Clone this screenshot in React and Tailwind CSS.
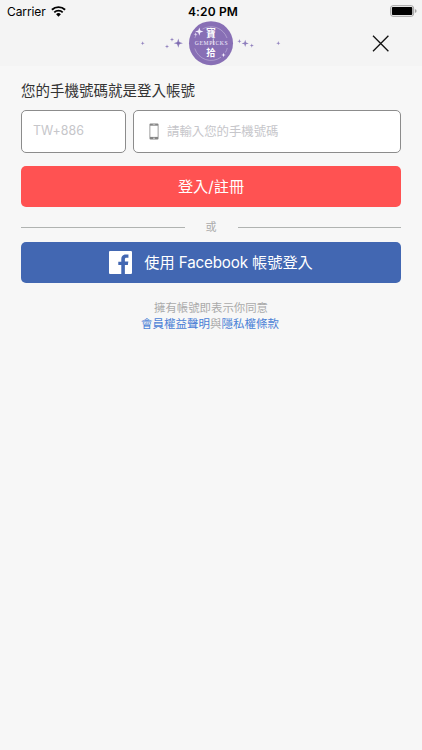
function Sparkle({ x, y, r, color = '#8f7fbd' }) {
  const k = r * 0.24;
  return (
    <path
      fill={color}
      d={`M${x} ${y - r}L${x + k} ${y - k}L${x + r} ${y}L${x + k} ${y + k}L${x} ${y + r}L${x - k} ${y + k}L${x - r} ${y}L${x - k} ${y - k}Z`}
    />
  );
}

function Logo() {
  return (
    <svg width="144" height="46" viewBox="139 20 144 46" className="block">
      <Sparkle x={142.7} y={43.2} r={2} />
      <Sparkle x={167} y={46.5} r={2.1} />
      <Sparkle x={172} y={39.6} r={2.1} />
      <Sparkle x={178.3} y={43.2} r={4.6} />
      <circle cx="178.3" cy="43.2" r="1.3" fill="#7f6cb0" />
      <circle cx="211" cy="43.2" r="22" fill="#886fb5" />
      <path d="M202.5 29A17 17 0 0 1 227 38M194.8 48.5A17 17 0 0 0 221 57.2M227.3 48A17 17 0 0 1 225.4 52.5M194.8 38A17 17 0 0 1 196.5 34.5" fill="none" stroke="#c5b8dc" strokeWidth="0.6" />
      <Sparkle x={199.3} y={31.6} r={4.2} color="#f4efff" />
      <Sparkle x={195.6} y={34.3} r={2} color="#ddd3ef" />
      <Sparkle x={223.5} y={55} r={2.3} color="#f4efff" />
      <g fill="#fff" textAnchor="middle" fontFamily="'Noto Sans CJK TC', sans-serif" fontWeight="700">
        <text x="211" y="36.9" fontSize="9.8">寶</text>
        <text x="211" y="56" fontSize="9.4">拾</text>
      </g>
      <text x="211.2" y="45.4" textLength="33" fill="#f4efff" textAnchor="middle" fontFamily="'Liberation Serif', serif" fontSize="5.6">GEMPICKS</text>
      <path d="M213.3 38.5V45" stroke="#fff" strokeWidth="0.7" />
      <Sparkle x={239.4} y={41.2} r={2.1} />
      <Sparkle x={245.2} y={43.4} r={3.6} />
      <Sparkle x={251.8} y={45.6} r={2.1} />
      <Sparkle x={278.3} y={43.2} r={2.1} />
    </svg>
  );
}

function StatusBar() {
  return (
    <div className="grid h-5 grid-cols-3 items-center pt-0.5 pr-[5px] pl-[7px] font-[Inter,sans-serif] text-black">
      <div className="flex items-center gap-[5px]">
        <span className="pt-px text-[12px] leading-[18px] tracking-[-0.1px]">Carrier</span>
        <svg width="15" height="11" viewBox="0 0 15 11" className="-mt-px">
          <path d="M.9 3.8A9.4 9.4 0 0 1 14.1 3.8" fill="none" stroke="#000" strokeWidth="1.9" />
          <path d="M3.3 6.4A6 6 0 0 1 11.7 6.4" fill="none" stroke="#000" strokeWidth="1.8" />
          <path d="M5.1 8.2A3.4 3.4 0 0 1 9.9 8.2L7.5 10.7Z" fill="#000" />
        </svg>
      </div>
      <div className="pt-px pl-[2px] text-center text-[12px] leading-[18px] font-semibold tracking-[0.15px] whitespace-nowrap">4:20 PM</div>
      <svg width="27" height="12" viewBox="0 0 27 12" className="-mt-px justify-self-end">
        <rect x=".6" y=".7" width="23" height="10.6" rx="2.4" fill="#f4f4f4" stroke="#a2a2a2" />
        <rect x="1.9" y="2" width="20.4" height="8" rx="1" />
        <path d="M24.9 4Q26.6 4.4 26.6 6T24.9 8Z" fill="#a2a2a2" />
      </svg>
    </div>
  );
}

function PhoneIcon() {
  return (
    <svg width="10" height="17" viewBox="0 0 10 17" className="shrink-0">
      <rect x=".5" y=".5" width="9" height="16" rx="1" fill="#858585" />
      <rect x="1.3" y="2.7" width="7.4" height="11.2" fill="#fff" />
      <path d="M3.8 1.6H6.2" stroke="#ddd" strokeWidth=".6" />
      <circle cx="5" cy="15.2" r=".7" fill="#eee" />
    </svg>
  );
}

function FacebookIcon() {
  return (
    <svg width="23" height="23" viewBox="0 0 24 24" className="shrink-0">
      <path
        fill="#fff"
        d="M22.68 0H1.32C.59 0 0 .59 0 1.32v21.36C0 23.41.59 24 1.32 24h11.5v-9.29H9.69v-3.62h3.13V8.41c0-3.1 1.89-4.79 4.66-4.79 1.32 0 2.46.1 2.8.14v3.24h-1.92c-1.5 0-1.79.72-1.79 1.76v2.31h3.59l-.47 3.62h-3.12V24h6.11c.73 0 1.32-.59 1.32-1.32V1.32C24 .59 23.41 0 22.68 0z"
      />
    </svg>
  );
}

export default function App() {
  return (
    <div className="min-h-[750px] w-full bg-[#f7f7f7] font-[Inter,'Noto_Sans_CJK_TC',sans-serif]">
      <header className="h-[66px] bg-[#f4f4f4]">
        <StatusBar />
        <div className="grid h-[46px] grid-cols-[1fr_144px_1fr] items-center">
          <span />
          <Logo />
          <button aria-label="關閉" className="mr-[33px] justify-self-end">
            <svg width="17" height="17" viewBox="0 0 17 17" className="block">
              <path d="M1 .8L16.4 16.2M16.4 .8L1 16.2" stroke="#111" strokeWidth="1.3" />
            </svg>
          </button>
        </div>
      </header>
      <main className="px-[21px] pt-[14px]">
        <h1 className="h-[30px] text-[14.5px] leading-[21px] text-[#333]">您的手機號碼就是登入帳號</h1>
        <div className="flex h-[43px] gap-[7px] text-[12.4px] text-[#c6c6ca]">
          <div className="flex w-[105px] items-center rounded-[5px] border border-[#8c8c8c] bg-white pl-[11px] tracking-[0.02px]">TW+886</div>
          <div className="flex flex-1 items-center gap-[8px] rounded-[5px] border border-[#8c8c8c] bg-white pl-[15px]">
            <PhoneIcon />
            <span className="pt-px">請輸入您的手機號碼</span>
          </div>
        </div>
        <button className="mt-[13px] flex h-[41px] w-full items-center justify-center rounded-[5px] bg-[#ff5252] pt-px text-[15.2px] text-white">登入/註冊</button>
        <div className="flex h-[35px] items-center gap-[21px] pt-[5px] text-[11px] text-[#aaa]">
          <span className="h-px flex-1 bg-[#b0b3b1]" />
          <span className="pt-px">或</span>
          <span className="h-px flex-1 bg-[#b0b3b1]" />
        </div>
        <button className="flex h-[41px] w-full items-center justify-center gap-[12px] rounded-[5px] bg-[#4267b2] text-[15.2px] text-white">
          <FacebookIcon />
          <span className="pt-[2px]">使用 <span className="tracking-[-0.2px]">Facebook</span> 帳號登入</span>
        </button>
        <p className="pt-[17px] text-center text-[11.4px] leading-[16px] text-[#aaa]">
          擁有帳號即表示你同意
          <br />
          <span className="pr-[2px] text-[11.5px]">
            <a className="text-[#4a7fd6]">會員權益聲明</a>與<a className="text-[#4a7fd6]">隱私權條款</a>
          </span>
        </p>
      </main>
    </div>
  );
}
